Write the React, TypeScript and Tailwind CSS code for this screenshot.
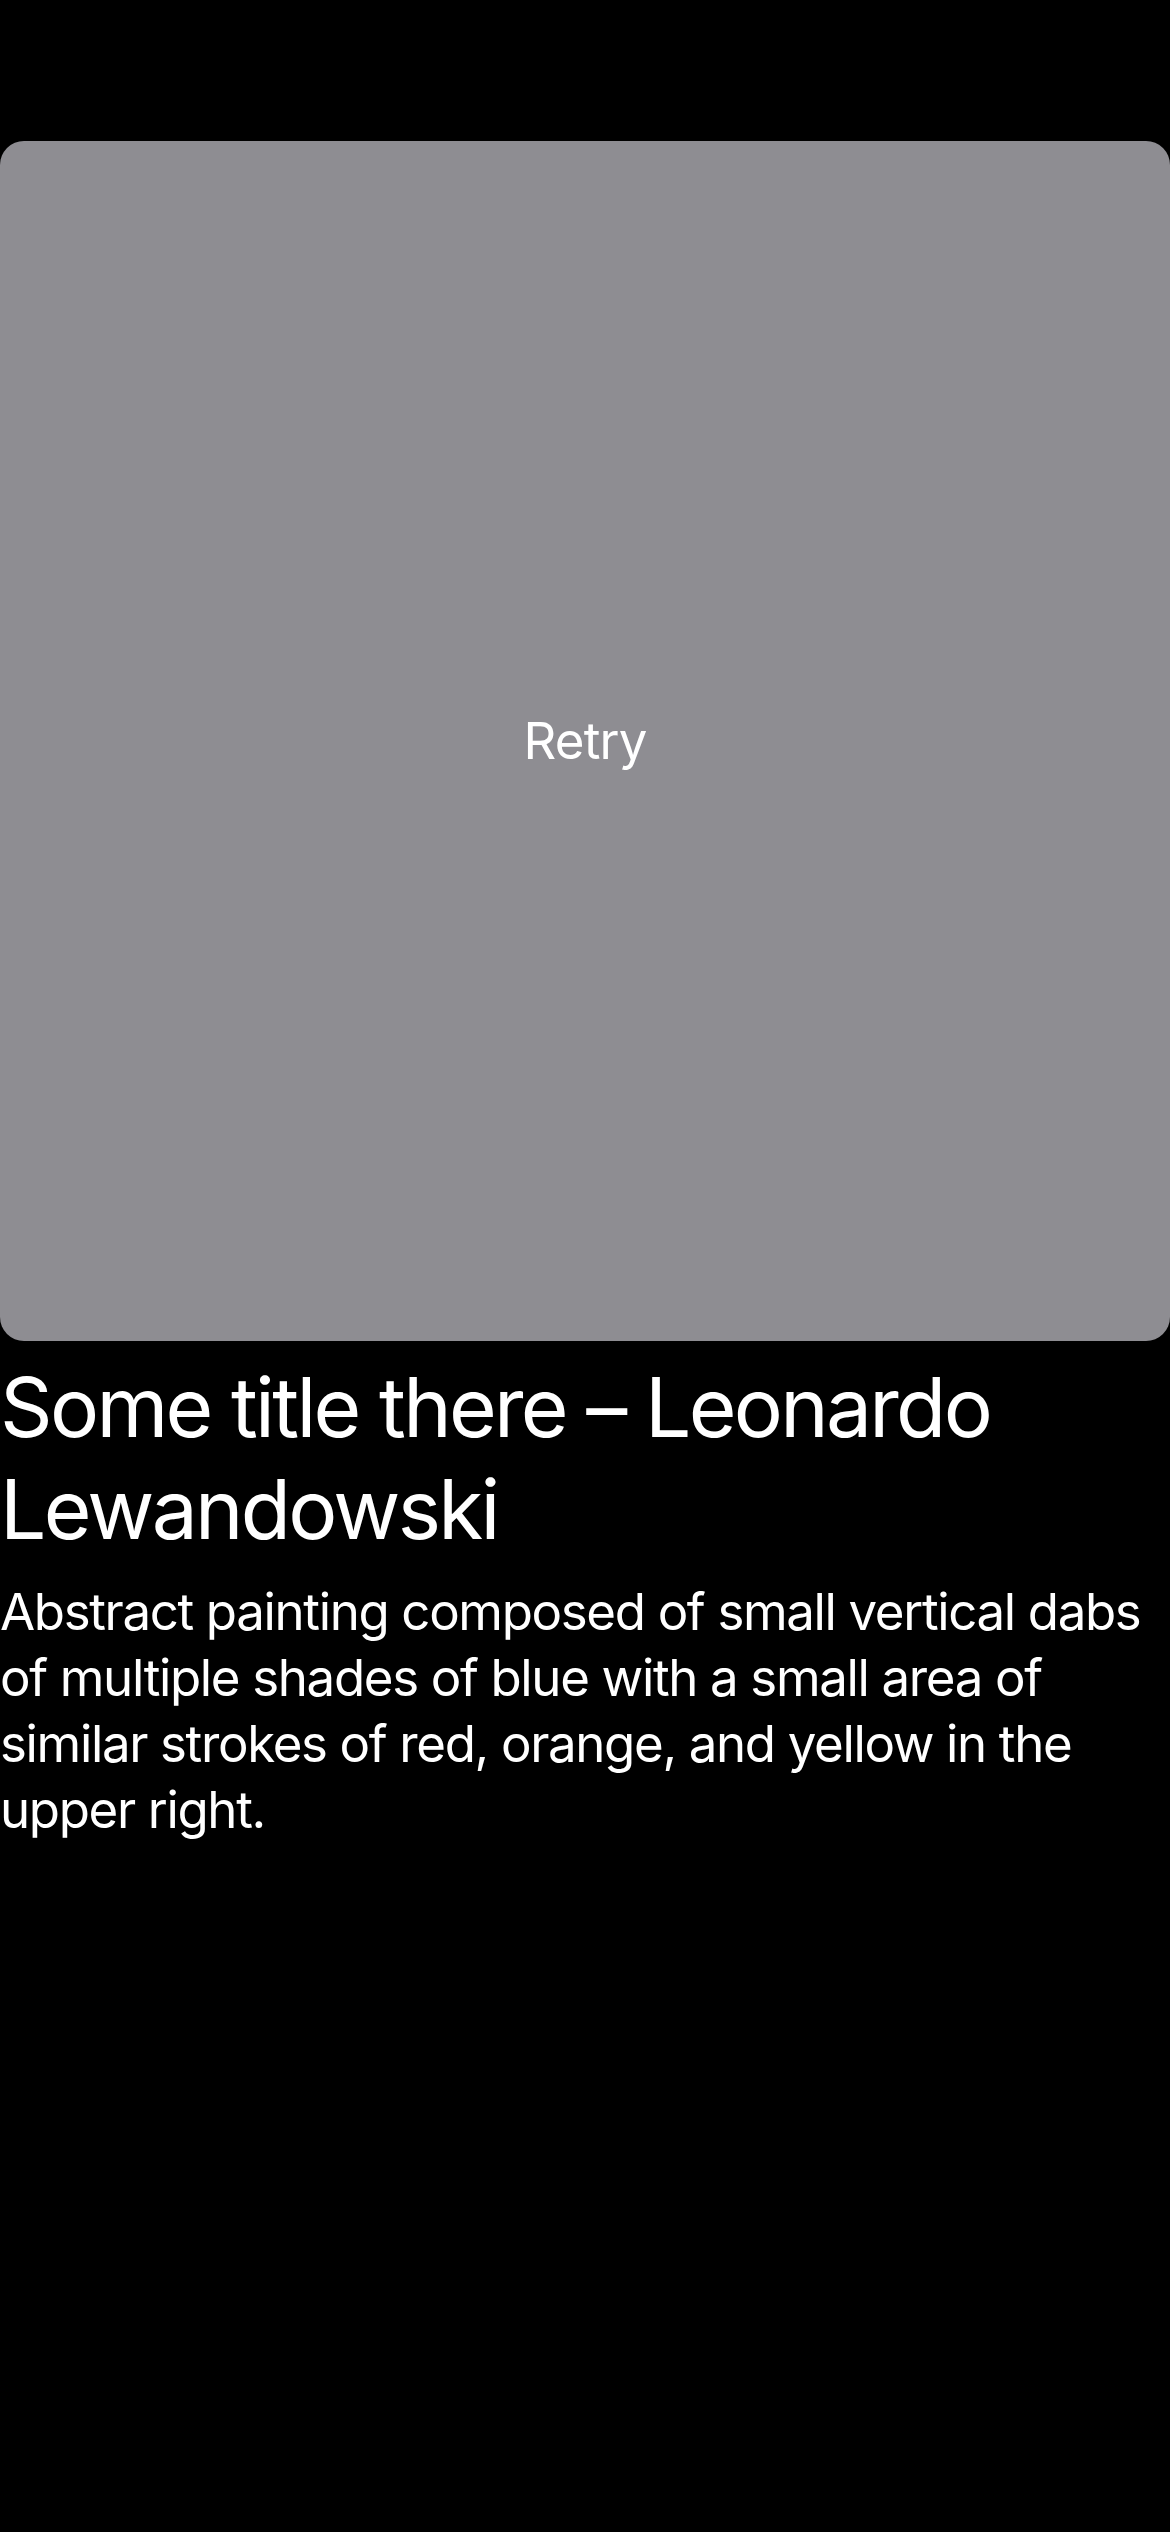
export default function App() {
  return (
    <div
      className="min-h-[2532px] w-[1170px] bg-black text-white"
      style={{ fontFamily: "Inter, 'Noto Sans', sans-serif" }}
    >
      <div className="pt-[141px]">
        <div className="flex h-[1200px] w-full items-center justify-center rounded-[24px] bg-[#8e8d92]">
          <span className="text-[51px] leading-[66px] tracking-[-0.8px] text-white">Retry</span>
        </div>
        <div className="mt-[16px] flex flex-col gap-[18px]">
          <h1 className="text-[82px] font-normal leading-[102px] tracking-[-2.7px]">
            Some title there – Leonardo Lewandowski
          </h1>
          <p className="text-[51px] leading-[66px] tracking-[-1.35px]">
            Abstract painting composed of small vertical dabs of multiple shades of blue with a small area of
            similar strokes of red, orange, and yellow in the upper right.
          </p>
        </div>
      </div>
    </div>
  );
}
